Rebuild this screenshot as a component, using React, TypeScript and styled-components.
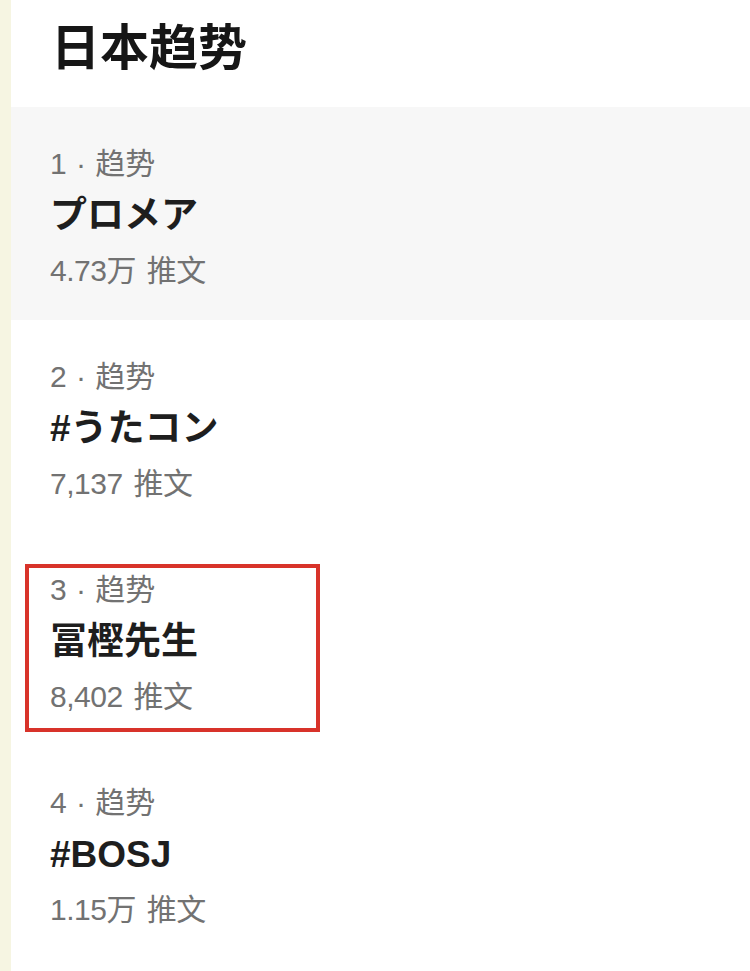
import React from 'react';
import styled, { createGlobalStyle } from "styled-components";

const GlobalStyle = createGlobalStyle`
    html, body {
        margin: 0;
        padding: 0;
        background: #ffffff;
    }
    body {
        font-family: "Liberation Sans", "Noto Sans CJK SC", sans-serif;
    }
`

type Trend = {
    rank: number
    title: string
    count: string
    active?: boolean
    marked?: boolean
}

const trends: Trend[] = [
    {rank: 1, title: 'プロメア', count: '4.73万 推文', active: true},
    {rank: 2, title: '#うたコン', count: '7,137 推文'},
    {rank: 3, title: '冨樫先生', count: '8,402 推文', marked: true},
    {rank: 4, title: '#BOSJ', count: '1.15万 推文'},
]

const TrendItem = (props: Trend) => {
    return (
        <StyledItem active={props.active}>
            <Content marked={props.marked}>
                <Meta>{props.rank} · 趋势</Meta>
                <Title>{props.title}</Title>
                <Count>{props.count}</Count>
            </Content>
        </StyledItem>
    );
};

export default function App() {
    return (
        <>
            <GlobalStyle/>
            <Page>
                <Sidebar/>
                <Panel>
                    <Header>日本趋势</Header>
                    {trends.map(t => <TrendItem key={t.rank} {...t}/>)}
                </Panel>
            </Page>
        </>
    );
}

const Page = styled.div`
    display: flex;
    min-height: 971px;
    width: 750px;
    overflow: hidden;
`

const Sidebar = styled.div`
    flex: 0 0 11px;
    background-color: #f6f5e2;
`

const Panel = styled.div`
    flex: 1;
    display: flex;
    flex-direction: column;
`

const Header = styled.h2`
    margin: 0;
    height: 107px;
    box-sizing: border-box;
    padding: 14px 0 0 40px;
    font-size: 49px;
    line-height: 60px;
    font-weight: 700;
    color: #161616;
    font-family: "Noto Sans CJK SC", sans-serif;
`

const StyledItem = styled.div.withConfig({
    shouldForwardProp: p => p !== 'active',
})<{active?: boolean}>`
    height: 213px;
    box-sizing: border-box;
    padding: 31px 0 0 14px;
    background-color: ${p => p.active ? '#f7f7f7' : 'transparent'};
`

const Content = styled.div.withConfig({
    shouldForwardProp: p => p !== 'marked',
})<{marked?: boolean}>`
    width: 295px;
    box-sizing: border-box;
    padding: 4px 21px 13px;
    border: 4px solid ${p => p.marked ? '#d8332a' : 'transparent'};
    display: flex;
    flex-direction: column;
`

const Meta = styled.div`
    font-size: 30px;
    line-height: 36px;
    color: #727272;
    word-spacing: 1px;
`

const Title = styled.div`
    margin-top: 14px;
    font-size: 37px;
    line-height: 40px;
    font-weight: 700;
    color: #1e1e1e;
`

const Count = styled.div`
    margin-top: 17px;
    font-size: 30px;
    line-height: 36px;
    color: #727272;
    word-spacing: 3px;
    letter-spacing: -0.5px;
`
